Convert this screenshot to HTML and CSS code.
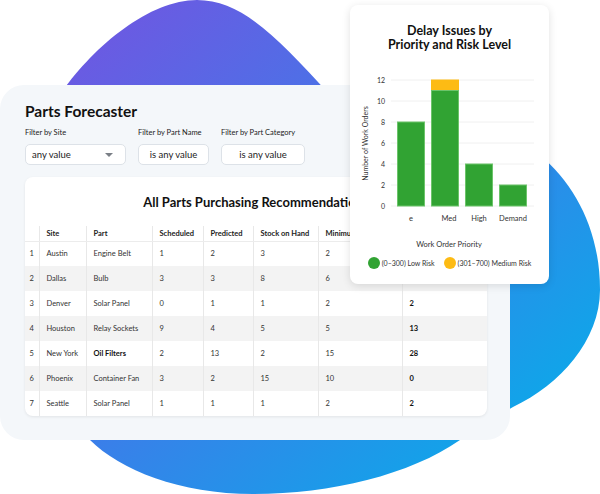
FILE: index.html
```html
<!DOCTYPE html>
<html>
<head>
<meta charset="utf-8">
<link rel="stylesheet" href="styles.css">
</head>
<body>
<svg class="blob" viewBox="0 0 600 494" width="600" height="494">
  <defs>
    <linearGradient id="bg" gradientUnits="userSpaceOnUse" x1="140" y1="0" x2="560" y2="470">
      <stop offset="0" stop-color="#6b5ae2"/>
      <stop offset="0.45" stop-color="#3d7ce9"/>
      <stop offset="1" stop-color="#06aee9"/>
    </linearGradient>
  </defs>
  <path fill="url(#bg)" d="M197 0 C242 0 278 38 330 95 L540 155 C575 185 600 230 600 290 C600 340 560 385 513 407 C490 420 475 432 460 440 C410 475 330 494 253 494 C180 494 120 470 90 440 L40 300 L62 92 C95 45 150 0 197 0 Z"/>
</svg>

<div class="main">
  <h1 class="title">Parts Forecaster</h1>
  <div class="filters">
    <div class="filter f1">
      <div class="filter-label">Filter by Site</div>
      <div class="select site"><span>any value</span><span class="caret"></span></div>
    </div>
    <div class="filter f2">
      <div class="filter-label">Filter by Part Name</div>
      <div class="select center">is any value</div>
    </div>
    <div class="filter f3">
      <div class="filter-label">Filter by Part Category</div>
      <div class="select center">is any value</div>
    </div>
  </div>
  <div class="table-card">
    <div class="table-title">All Parts Purchasing Recommendations</div>
    <table class="grid">
      <colgroup>
        <col class="c0"><col class="c1"><col class="c2"><col class="c3"><col class="c4"><col class="c5"><col class="c6"><col class="c7">
      </colgroup>
      <thead>
        <tr><th></th><th>Site</th><th>Part</th><th>Scheduled</th><th>Predicted</th><th>Stock on Hand</th><th>Minimum</th><th>Recommended</th></tr>
      </thead>
      <tbody>
        <tr><td>1</td><td>Austin</td><td>Engine Belt</td><td>1</td><td>2</td><td>3</td><td>2</td><td class="b">1</td></tr>
        <tr><td>2</td><td>Dallas</td><td>Bulb</td><td>3</td><td>3</td><td>8</td><td>6</td><td class="b">4</td></tr>
        <tr><td>3</td><td>Denver</td><td>Solar Panel</td><td>0</td><td>1</td><td>1</td><td>2</td><td class="b">2</td></tr>
        <tr><td>4</td><td>Houston</td><td>Relay Sockets</td><td>9</td><td>4</td><td>5</td><td>5</td><td class="b">13</td></tr>
        <tr><td>5</td><td>New York</td><td class="b">Oil Filters</td><td>2</td><td>13</td><td>2</td><td>15</td><td class="b">28</td></tr>
        <tr><td>6</td><td>Phoenix</td><td>Container Fan</td><td>3</td><td>2</td><td>15</td><td>10</td><td class="b">0</td></tr>
        <tr><td>7</td><td>Seattle</td><td>Solar Panel</td><td>1</td><td>1</td><td>1</td><td>2</td><td class="b">2</td></tr>
      </tbody>
    </table>
  </div>
</div>

<div class="chart-card">
  <div class="chart-title">Delay Issues by<br>Priority and Risk Level</div>
  <svg class="chart" width="199" height="205" viewBox="0 0 199 205">
    <g class="grid-lines">
      <line x1="41" x2="184" y1="29" y2="29"/>
      <line x1="41" x2="184" y1="50" y2="50"/>
      <line x1="41" x2="184" y1="71" y2="71"/>
      <line x1="41" x2="184" y1="92" y2="92"/>
      <line x1="41" x2="184" y1="113" y2="113"/>
      <line x1="41" x2="184" y1="134" y2="134"/>
      <line x1="41" x2="184" y1="155" y2="155"/>
    </g>
    <g class="ticks">
      <text x="35" y="29">12</text>
      <text x="35" y="50">10</text>
      <text x="35" y="71">8</text>
      <text x="35" y="92">6</text>
      <text x="35" y="113">4</text>
      <text x="35" y="134">2</text>
      <text x="35" y="155">0</text>
    </g>
    <text class="axis-title" transform="translate(15 92.5) rotate(-90)">Number of Work Orders</text>
    <rect class="bar-g" x="47.5" y="71" width="27" height="84"/>
    <rect class="bar-y" x="81.5" y="29" width="27" height="10.5"/>
    <rect class="bar-g" x="81.5" y="39.5" width="27" height="115.5"/>
    <rect class="bar-g" x="115.5" y="113" width="27" height="42"/>
    <rect class="bar-g" x="149.5" y="134" width="27" height="21"/>
    <g class="xlabels">
      <text x="61" y="167">e</text>
      <text x="99" y="167">Med</text>
      <text x="129" y="167">High</text>
      <text x="163" y="167">Demand</text>
    </g>
    <text class="x-title" x="99" y="193">Work Order Priority</text>
  </svg>
  <div class="legend">
    <span class="item"><span class="dot green"></span>(0–300) Low Risk</span>
    <span class="item"><span class="dot yellow"></span>(301–700) Medium Risk</span>
  </div>
</div>
</body>
</html>
```
FILE: styles.css
```css
* { box-sizing: border-box; }
html, body { margin: 0; padding: 0; }
body {
  width: 600px;
  height: 494px;
  overflow: hidden;
  position: relative;
  background: #ffffff;
  font-family: Lato, "Liberation Sans", sans-serif;
  color: #222;
}
.blob { position: absolute; left: 0; top: 0; z-index: 0; }

.main {
  position: relative;
  z-index: 1;
  margin-top: 85px;
  width: 510px;
  height: 355px;
  background: #f4f7fa;
  border-radius: 24px;
  padding: 16px 23px 0 25px;
}
.title {
  margin: 0;
  font-size: 15.5px;
  line-height: 20px;
  font-weight: 700;
  color: #111;
}
.filters { display: flex; margin-top: 7px; }
.filter { display: flex; flex-direction: column; gap: 6px; }
.f1 { width: 101px; margin-right: 12px; }
.f2 { width: 71px; margin-right: 12px; }
.f3 { width: 84px; }
.filter-label { font-size: 7.5px; line-height: 10px; color: #222; white-space: nowrap; }
.select {
  height: 21px;
  background: #fff;
  border: 1px solid #dde2e8;
  border-radius: 5px;
  font-size: 9.5px;
  color: #222;
  display: flex;
  align-items: center;
  white-space: nowrap;
}
.select.site { justify-content: space-between; padding: 0 12px 0 6px; }
.select.center { justify-content: center; }
.caret {
  width: 0; height: 0;
  border-left: 4px solid transparent;
  border-right: 4px solid transparent;
  border-top: 4px solid #7a7f86;
}

.table-card {
  margin-top: 12px;
  height: 239px;
  background: #fff;
  border-radius: 8px;
  overflow: hidden;
  box-shadow: 0 1px 3px rgba(0,0,0,0.08);
}
.table-title {
  padding-top: 16px;
  height: 49px;
  font-size: 13px;
  line-height: 18px;
  font-weight: 700;
  text-align: center;
  color: #111;
  white-space: nowrap;
}
.grid { width: 462px; border-collapse: collapse; table-layout: fixed; font-size: 7.5px; }
.c0 { width: 14px; } .c1 { width: 47px; } .c2 { width: 66px; } .c3 { width: 51px; }
.c4 { width: 50px; } .c5 { width: 65px; } .c6 { width: 84px; } .c7 { width: 85px; }
.grid th, .grid td {
  padding: 0 0 0 7px;
  text-align: left;
  white-space: nowrap;
  overflow: hidden;
  border-left: 1px solid #e8e8e8;
}
.grid th:first-child, .grid td:first-child { border-left: none; padding: 0; text-align: center; }
.grid th { height: 15px; font-weight: 700; color: #222; border-bottom: 1px solid #ececec; }
.grid td { height: 25px; color: #333; }
.grid tbody tr:nth-child(even) td { background: #f3f3f3; }
.grid td.b { font-weight: 700; color: #111; }

.chart-card {
  position: absolute;
  z-index: 2;
  left: 350px;
  top: 5px;
  width: 199px;
  height: 279px;
  background: #fff;
  border-radius: 8px;
  box-shadow: 0 2px 8px rgba(0,0,0,0.12);
}
.chart-title {
  padding-top: 19px;
  font-size: 12.5px;
  line-height: 13.5px;
  font-weight: 700;
  text-align: center;
  color: #111;
}
.chart { display: block; }
.grid-lines line { stroke: #f0f0f0; stroke-width: 1; }
.ticks text { font-size: 7px; fill: #333; text-anchor: end; dominant-baseline: central; font-family: Lato, "Liberation Sans", sans-serif; }
.axis-title { font-size: 7px; fill: #333; text-anchor: middle; dominant-baseline: central; font-family: Lato, "Liberation Sans", sans-serif; }
.bar-g { fill: #31a333; stroke: #6cc46a; stroke-width: 1; }
.bar-y { fill: #fdbb14; stroke: #fdbb14; stroke-width: 1; }
.xlabels text { font-size: 7.5px; fill: #333; text-anchor: middle; dominant-baseline: central; font-family: Lato, "Liberation Sans", sans-serif; }
.x-title { font-size: 7.5px; fill: #333; text-anchor: middle; dominant-baseline: central; font-family: Lato, "Liberation Sans", sans-serif; }
.legend {
  display: flex;
  justify-content: center;
  gap: 9px;
  margin-top: 1px;
  font-size: 7px;
  line-height: 12px;
  color: #333;
}
.item { display: flex; align-items: center; gap: 2px; white-space: nowrap; }
.dot { width: 12px; height: 12px; border-radius: 50%; display: inline-block; }
.dot.green { background: #31a333; }
.dot.yellow { background: #fdbb14; }
```
